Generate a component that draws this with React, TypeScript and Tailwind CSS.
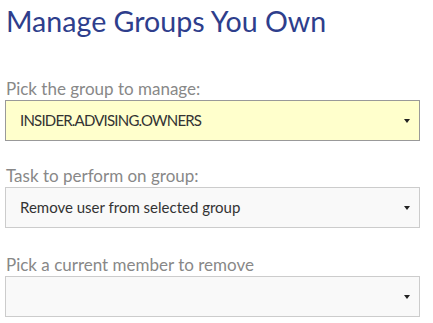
type SelectProps = {
  value?: string;
  highlight?: boolean;
  caps?: boolean;
};

function FakeSelect({ value, highlight, caps }: SelectProps) {
  return (
    <div
      className={
        "flex h-[41px] w-[415px] items-center justify-between pl-[14px] pr-[9px] text-[15px] text-[#333] " +
        (highlight ? "border border-[#999] bg-[#ffffcc]" : "border border-[#ccc] bg-[#f9f9f9]")
      }
    >
      <span className={caps ? "tracking-[-0.8px]" : ""}>{value}</span>
      <span className="h-0 w-0 border-x-[3px] border-t-[4px] border-x-transparent border-t-[#222]" />
    </div>
  );
}

export default function App() {
  return (
    <div className="h-[323px] w-[433px] bg-white pl-[5px] font-['Lato',sans-serif]">
      <h1 className="pl-px pt-[4px] text-[28.6px] leading-[34px] text-[#2e3e8c]">Manage Groups You Own</h1>

      <label className="mt-[40px] block pl-px text-[17px] leading-[22px] text-[#888]">Pick the group to manage:</label>
      <FakeSelect value="INSIDER.ADVISING.OWNERS" highlight caps />

      <label className="mt-[24px] block pl-px text-[17px] leading-[22px] text-[#888]">Task to perform on group:</label>
      <FakeSelect value="Remove user from selected group" />

      <label className="mt-[26px] block pl-px text-[17px] leading-[22px] text-[#888]">Pick a current member to remove</label>
      <FakeSelect />
    </div>
  );
}
